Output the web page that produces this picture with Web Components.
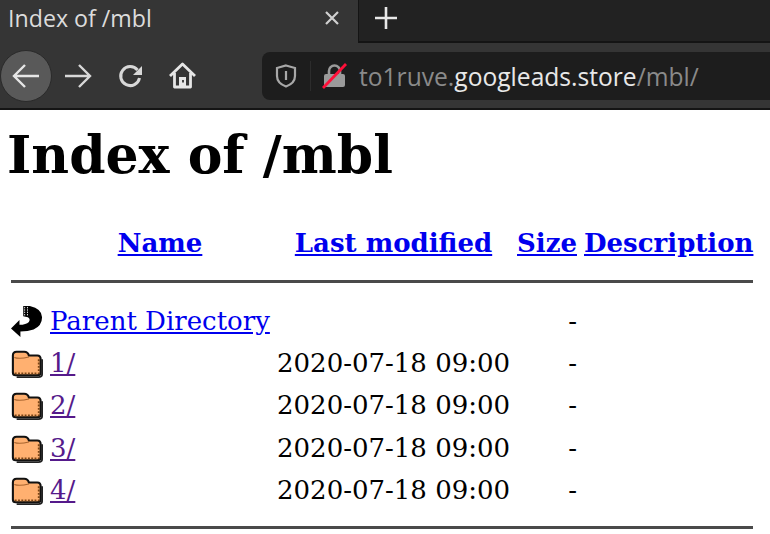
<!DOCTYPE html>
<html>
<head>
<meta charset="utf-8">
<title>Index of /mbl</title>
<style>
  html, body { margin: 0; padding: 0; background: #fff; overflow: hidden; }
</style>
</head>
<body>
<browser-chrome title-text="Index of /mbl"></browser-chrome>
<dir-listing heading="Index of /mbl">
  <dir-row type="back" label="Parent Directory" size="-"></dir-row>
  <dir-row type="folder" label="1/" visited modified="2020-07-18 09:00" size="-"></dir-row>
  <dir-row type="folder" label="2/" visited modified="2020-07-18 09:00" size="-"></dir-row>
  <dir-row type="folder" label="3/" visited modified="2020-07-18 09:00" size="-"></dir-row>
  <dir-row type="folder" label="4/" visited modified="2020-07-18 09:00" size="-"></dir-row>
</dir-listing>

<script>
class BrowserChrome extends HTMLElement {
  constructor() {
    super();
    this.attachShadow({ mode: "open" });
    this.shadowRoot.innerHTML = `
    <style>
      :host {
        display: block;
        height: 110px;
        background: #353535;
        font-family: "Open Sans", "Noto Sans", sans-serif;
        color: #e8e8e8;
        box-sizing: border-box;
        border-bottom: 2px solid #141414;
      }
      #tabs {
        display: flex;
        height: 43px;
        background: #222;
        box-sizing: border-box;
      }
      #tab {
        width: 358px;
        background: #353535;
        display: flex;
        align-items: center;
        justify-content: space-between;
        padding: 0 18px 8px 8px;
        box-sizing: border-box;
        font-size: 23.2px;
        color: #dcdcdc;
      }
      #new {
        width: 54px;
        display: flex;
        align-items: center;
        justify-content: center;
        padding-bottom: 6px;
        box-sizing: border-box;
        border-bottom: 2px solid #141414;
        border-left: 1px solid #141414;
      }
      #rest { flex: 1; border-bottom: 2px solid #141414; }
      #toolbar {
        display: flex;
        align-items: center;
        height: 65px;
      }
      #nav {
        display: flex;
        align-items: center;
        width: 262px;
        flex: none;
      }
      #back {
        width: 52px;
        height: 52px;
        border-radius: 50%;
        background: #595959;
        border: 1px solid #2a2a2a;
        box-sizing: border-box;
        display: flex;
        align-items: center;
        justify-content: center;
      }
      .btn { width: 52px; display: flex; justify-content: center; }
      svg { display: block; }
      #url {
        flex: 1;
        height: 48px;
        background: #1d1d1d;
        border-radius: 8px 0 0 8px;
        display: flex;
        align-items: center;
        font-size: 24.6px;
        margin-top: 1px;
      }
      #shield { width: 48px; display: flex; justify-content: center; border-right: 1px solid #2c2c2c; height: 30px; align-items: center; margin-right: 11px; }
      #lock { width: 28px; margin-right: 9px; }
      .dim { color: #8a8a8a; }
    </style>
    <div id="tabs">
      <div id="tab">
        <span>${this.getAttribute("title-text")}</span>
        <svg width="16" height="16" viewBox="0 0 16 16"><path d="M2 2 14 14M14 2 2 14" stroke="#d0d0d0" stroke-width="2.2"/></svg>
      </div>
      <div id="new">
        <svg width="24" height="24" viewBox="0 0 24 24"><path d="M12 1V23M1 12H23" stroke="#e8e8e8" stroke-width="2.6"/></svg>
      </div>
      <div id="rest"></div>
    </div>
    <div id="toolbar">
      <div id="nav">
        <div id="back">
          <svg width="28" height="26" viewBox="0 0 28 26"><path d="M27 13H2M13 2 2 13 13 24" fill="none" stroke="#e6e6e6" stroke-width="2.4"/></svg>
        </div>
        <div class="btn">
          <svg width="28" height="26" viewBox="0 0 28 26"><path d="M1 13H26M15 2 26 13 15 24" fill="none" stroke="#d8d8d8" stroke-width="2.4"/></svg>
        </div>
        <div class="btn">
          <svg width="26" height="26" viewBox="0 0 26 26"><path d="M20.500 7A9.500 9.500 0 1 0 22.500 15" fill="none" stroke="#d8d8d8" stroke-width="3"/><path d="M25 3V12H16Z" fill="#d8d8d8"/></svg>
        </div>
        <div class="btn">
          <svg width="27" height="27" viewBox="0 0 27 27"><path d="M1 14 13.500 2 26 14M5.500 11V25H21.500V11" fill="none" stroke="#e6e6e6" stroke-width="2.800" stroke-linejoin="round"/><rect x="10" y="15" width="7" height="10" fill="#e6e6e6"/><rect x="13" y="18" width="2" height="2.500" fill="#444"/></svg>
        </div>
      </div>
      <div id="url">
        <div id="shield">
          <svg width="22" height="24" viewBox="0 0 22 24"><path d="M11 1.500 20 4V12C20 18 15 21 11 22.500 7 21 2 18 2 12V4Z" fill="none" stroke="#a8a8a8" stroke-width="2.200"/><path d="M11 7V16" stroke="#a8a8a8" stroke-width="2.200"/></svg>
        </div>
        <div id="lock">
          <svg width="26" height="26" viewBox="0 0 26 26"><rect x="2" y="11" width="21" height="13" rx="2" fill="#9a9a9a"/><path d="M7 11V8A5.500 5.500 0 0 1 18 8V11" fill="none" stroke="#9a9a9a" stroke-width="2.600"/><path d="M1 25 24 1" stroke="#ff0f39" stroke-width="2.800"/></svg>
        </div>
        <span><span class="dim">to1ruve.</span>googleads.store<span class="dim">/mbl/</span></span>
      </div>
    </div>
    `;
  }
}

class DirListing extends HTMLElement {
  constructor() {
    super();
    this.attachShadow({ mode: "open" });
    this.shadowRoot.innerHTML = `
    <style>
      :host {
        display: block;
        font-family: "DejaVu Serif", serif;
        color: #000;
        --cols: 32px 220px 233px 60px 168px;
      }
      h1 {
        font-size: 52px;
        line-height: 56px;
        margin: 0;
        padding: 17px 0 0 7px;
        font-weight: bold;
      }
      header {
        display: grid;
        grid-template-columns: var(--cols);
        column-gap: 7px;
        margin: 42px 0 0 11px;
        font-size: 26px;
        line-height: 36px;
        font-weight: bold;
        text-align: center;
      }
      a { color: #0000ee; text-decoration: underline; }
      hr {
        height: 3px;
        margin: 0 17px 0 11px;
        border: 0;
        background: #4a4a4a;
      }
      #top { margin-top: 19px; margin-bottom: 17px; }
      #bottom { margin-top: 15px; }
    </style>
    <h1>${this.getAttribute("heading")}</h1>
    <header>
      <span></span>
      <span><a href="#">Name</a></span>
      <span><a href="#">Last modified</a></span>
      <span><a href="#">Size</a></span>
      <span><a href="#">Description</a></span>
    </header>
    <hr id="top">
    <slot></slot>
    <hr id="bottom">
    `;
  }
}

const ICONS = {
  folder: `<svg width="34" height="30" viewBox="0 0 34 30">
    <path d="M2 6Q2 2 6 2H14Q18 2 19 6H28Q31.500 6 31.500 10V24Q31.500 27 28 27H5Q2 27 2 24Z" fill="#ffb070" stroke="#111" stroke-width="2.200"/>
    <path d="M3.500 8Q9 10 19 7.500" fill="none" stroke="#a8642e" stroke-width="1.200"/>
    <path d="M4 25H29.500V10" fill="none" stroke="#7a4516" stroke-width="2" stroke-dasharray="2 1.500"/>
    <path d="M33 10V26Q33 29 29 29H6" fill="none" stroke="#222" stroke-width="2"/>
  </svg>`,
  back: `<svg width="34" height="34" viewBox="0 0 34 34">
    <path d="M13 0H20Q33 3 33 12Q33 21 24 25Q18 27 10 27V33L0 24 9 15V20Q16 20 19 17Q21 14 18 12L13 11Z" fill="#000"/>
    <path d="M14.500 1V10M17.500 1V11" stroke="#eee" stroke-width="1" stroke-dasharray="1.500 1"/>
  </svg>`
};

class DirRow extends HTMLElement {
  constructor() {
    super();
    this.attachShadow({ mode: "open" });
    const visited = this.hasAttribute("visited");
    this.shadowRoot.innerHTML = `
    <style>
      :host {
        display: grid;
        grid-template-columns: var(--cols);
        column-gap: 7px;
        margin-left: 11px;
        height: 42.2px;
        align-items: center;
        font-size: 26px;
        white-space: nowrap;
      }
      a { color: ${visited ? "#551a8b" : "#0000ee"}; text-decoration: underline; }
      #size { text-align: right; }
      #icon { height: 34px; display: flex; align-items: center; padding-top: 2px; }
      svg { display: block; }
    </style>
    <span id="icon">${ICONS[this.getAttribute("type")]}</span>
    <span><a href="#">${this.getAttribute("label")}</a></span>
    <span>${this.getAttribute("modified") || ""}</span>
    <span id="size">${this.getAttribute("size")}</span>
    <span></span>
    `;
  }
}

customElements.define("browser-chrome", BrowserChrome);
customElements.define("dir-listing", DirListing);
customElements.define("dir-row", DirRow);
</script>
</body>
</html>
